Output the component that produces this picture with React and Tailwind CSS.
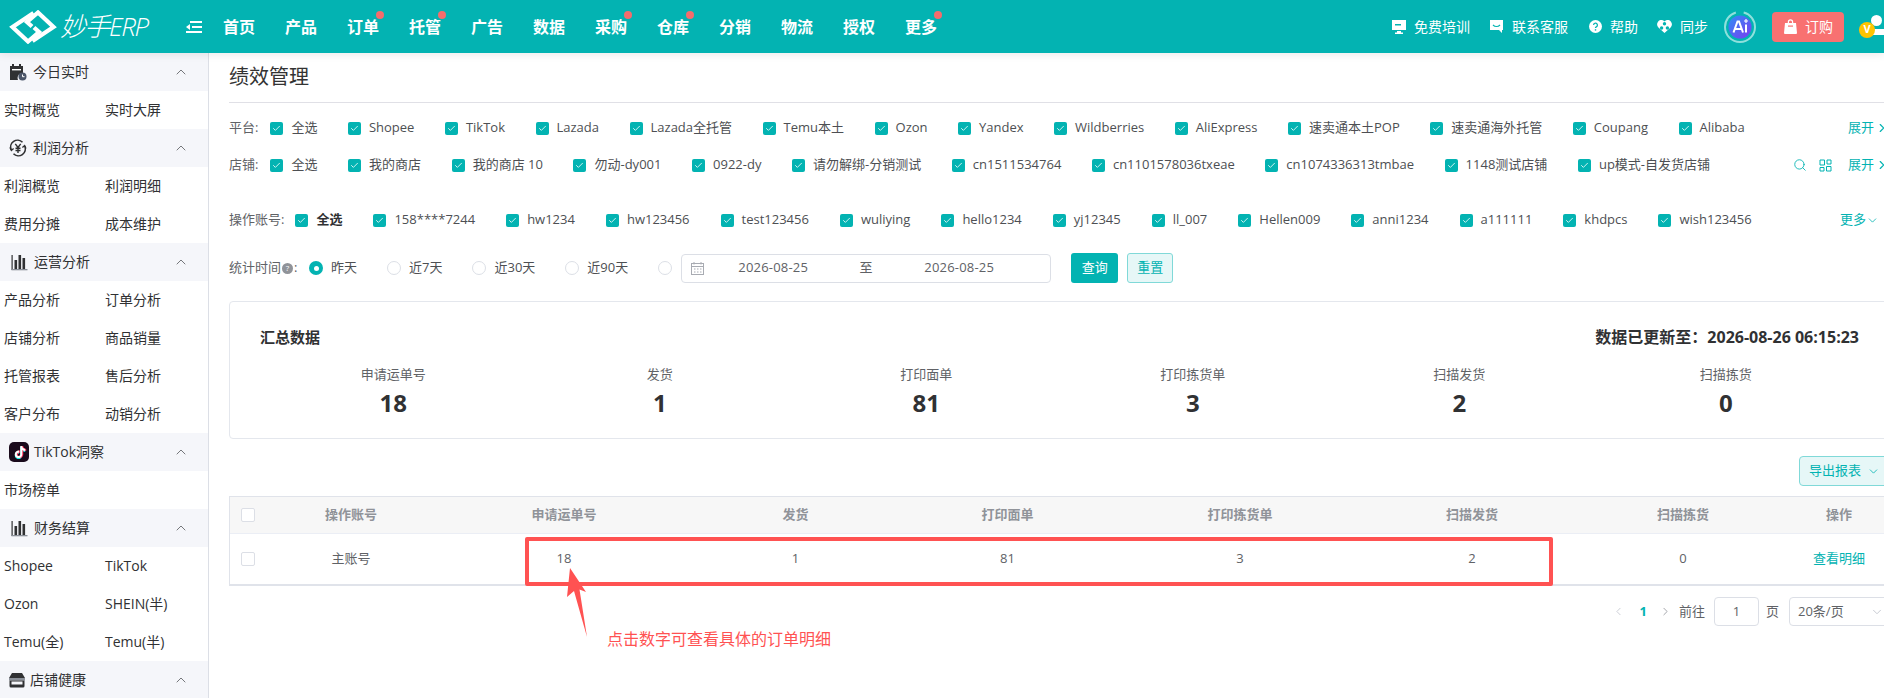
import { SiTiktok } from 'react-icons/si';
import { ChevronUp, ChevronDown, ChevronLeft, ChevronRight, Search, Check } from 'lucide-react';

const NAV = [
  ['首页'], ['产品'], ['订单', true], ['托管', true], ['广告'], ['数据'], ['采购', true],
  ['仓库', true], ['分销'], ['物流'], ['授权'], ['更多', true],
];
const PLATFORMS = ['全选', 'Shopee', 'TikTok', 'Lazada', 'Lazada全托管', 'Temu本土', 'Ozon', 'Yandex', 'Wildberries', 'AliExpress', '速卖通本土POP', '速卖通海外托管', 'Coupang', 'Alibaba'];
const SHOPS = ['全选', '我的商店', '我的商店 10', '勿动-dy001', '0922-dy', '请勿解绑-分销测试', 'cn1511534764', 'cn1101578036txeae', 'cn1074336313tmbae', '1148测试店铺', 'up模式-自发货店铺'];
const ACCOUNTS = ['全选', '158****7244', 'hw1234', 'hw123456', 'test123456', 'wuliying', 'hello1234', 'yj12345', 'll_007', 'Hellen009', 'anni1234', 'a111111', 'khdpcs', 'wish123456'];
const STATS = [['申请运单号', '18'], ['发货', '1'], ['打印面单', '81'], ['打印拣货单', '3'], ['扫描发货', '2'], ['扫描拣货', '0']];

// 侧边栏图标
const CalendarIcon = () => (
  <svg width="18" height="18" viewBox="0 0 18 18">
    <path d="M1 3h2V1h2v2h5V1h2v2h2v7a5 5 0 0 0-5 7H1z" fill="#303133" />
    <rect x="3" y="6" width="9" height="1.4" fill="#fff" />
    <circle cx="13.5" cy="13.5" r="4" fill="#4a5568" />
    <path d="M13.5 11.5v2.2h2" stroke="#fff" strokeWidth="1" fill="none" />
  </svg>
);
const YenIcon = () => (
  <svg width="18" height="18" viewBox="0 0 18 18" fill="none" stroke="#303133">
    <path d="M2.2 11A7 7 0 0 1 13.5 3.2" strokeWidth="1.6" />
    <path d="M15.8 7A7 7 0 0 1 4.5 14.8" strokeWidth="1.6" />
    <path d="M1 8.5l1.4 3 2.2-2M17 9.5l-1.4-3-2.2 2" strokeWidth="1.3" />
    <path d="M6.3 4.8L9 8.5l2.7-3.7M9 8.5V14M6.5 9.3h5M6.5 11.5h5" strokeWidth="1.4" />
  </svg>
);
const BarsIcon = () => (
  <svg width="17" height="17" viewBox="0 0 17 17" fill="#303133">
    <rect x="0.5" y="1" width="1.2" height="15" />
    <rect x="0.5" y="15" width="16" height="1.3" fill="#8a8f98" />
    <rect x="3.5" y="6" width="2.6" height="9" />
    <rect x="7.5" y="1" width="2.6" height="14" />
    <rect x="11.5" y="4" width="2.6" height="11" />
  </svg>
);
const StoreIcon = () => (
  <svg width="16" height="16" viewBox="0 0 16 16">
    <path d="M3 1h10l3 5H0z" fill="#303133" />
    <rect x="0" y="6" width="16" height="2.5" fill="#8a8f98" />
    <path d="M0.5 8.5h15V14a1.5 1.5 0 0 1-1.5 1.5H2A1.5 1.5 0 0 1 0.5 14z" fill="#303133" />
    <rect x="2.5" y="9.5" width="11" height="3" fill="#f5f6fa" />
  </svg>
);
const TiktokIcon = () => (
  <span className="relative flex h-5 w-5 items-center justify-center rounded-[5px] bg-[#1a0b1c]">
    <SiTiktok className="absolute left-[4.5px] top-[4.5px] text-[12px] text-[#25f4ee]" />
    <SiTiktok className="absolute left-[5.5px] top-[3.5px] text-[12px] text-[#fe2c55]" />
    <SiTiktok className="absolute left-[5px] top-[4px] text-[12px] text-white" />
  </span>
);

const SIDE = [
  { title: '今日实时', icon: <CalendarIcon />, gap: 'ml-[6px]', items: ['实时概览', '实时大屏'] },
  { title: '利润分析', icon: <YenIcon />, gap: 'ml-[6px]', items: ['利润概览', '利润明细', '费用分摊', '成本维护'] },
  { title: '运营分析', icon: <BarsIcon />, gap: 'ml-[6px]', pad: 'pl-[11px]', items: ['产品分析', '订单分析', '店铺分析', '商品销量', '托管报表', '售后分析', '客户分布', '动销分析'] },
  { title: 'TikTok洞察', icon: <TiktokIcon />, gap: 'ml-[5px]', items: ['市场榜单'] },
  { title: '财务结算', icon: <BarsIcon />, gap: 'ml-[6px]', pad: 'pl-[11px]', items: ['Shopee', 'TikTok', 'Ozon', 'SHEIN(半)', 'Temu(全)', 'Temu(半)'] },
  { title: '店铺健康', icon: <StoreIcon />, gap: 'ml-[5px]', items: [] },
];

const Logo = () => (
  <svg width="48" height="34" viewBox="0 0 48 34" fill="none" stroke="#fff" strokeWidth="4.2" strokeLinejoin="miter">
    <path d="M24.5 3L3.5 17l15.5 14.5L30 22l-5-4.5" />
    <path d="M23.5 31L44.5 17 29 2.5 18 12l5 4.5" />
  </svg>
);

const Box = ({ checked = true }) => (
  checked ? (
    <span className="flex h-[13px] w-[13px] shrink-0 items-center justify-center rounded-[2px] bg-[#03b3b2]">
      <Check size={9} strokeWidth={2.5} className="text-[#d9f5f4]" />
    </span>
  ) : (
    <span className="block h-[14px] w-[14px] shrink-0 rounded-[2px] border border-[#dcdfe6] bg-white" />
  )
);

const CheckRow = ({ items, boldFirst, gap = 'mr-[30.5px]' }) => (
  <div className="flex items-center">
    {items.map((t, i) => (
      <span key={t} className={`${gap} flex items-center whitespace-nowrap`}>
        <Box />
        <span className={`ml-[8px] ${boldFirst && i === 0 ? 'font-bold text-[#303133]' : 'text-[#4d4f53]'}`}>{t}</span>
      </span>
    ))}
  </div>
);

const Radio = ({ label, on }) => (
  <span className="mr-[30px] flex items-center whitespace-nowrap">
    {on ? (
      <span className="flex h-[14px] w-[14px] items-center justify-center rounded-full bg-[#03b3b2]">
        <span className="h-[5px] w-[5px] rounded-full bg-white" />
      </span>
    ) : (
      <span className="h-[14px] w-[14px] rounded-full border border-[#dcdfe6]" />
    )}
    {label && <span className="ml-[8px] text-[#4d4f53]">{label}</span>}
  </span>
);

const Expand = () => (
  <span className="flex items-center whitespace-nowrap text-[#03b3b2]">展开<ChevronRight size={14} className="ml-[1px]" /></span>
);

const COLS = 'grid grid-cols-[44px_154px_272px_191px_233px_232px_232px_190px_122px]';

export default function App() {
  return (
    <div className="flex h-[698px] w-[1884px] flex-col overflow-hidden bg-white text-[13px] text-[#606266] font-['Open_Sans','Noto_Sans_CJK_SC',sans-serif]">
      {/* 顶部导航 */}
      <header className="relative z-10 flex h-[53px] shrink-0 items-center bg-[#03b3b2] text-white shadow-[0_2px_8px_rgba(0,0,0,0.08)]">
        <div className="ml-[9px] shrink-0"><Logo /></div>
        <span className="ml-[3px] w-[89px] whitespace-nowrap text-[26px] font-light italic tracking-[-1.5px]">妙手ERP</span>
        <svg className="ml-[37px] shrink-0" width="16" height="12" viewBox="0 0 16 12" fill="#fff">
          <rect x="4" y="0" width="12" height="2" />
          <rect x="6" y="5" width="10" height="2" />
          <rect x="0" y="10" width="16" height="2" />
          <path d="M0 6l4-3v6z" />
        </svg>
        <nav className="ml-[21px] flex">
          {NAV.map(([t, dot]) => (
            <span key={t} className="relative mr-[30px] w-[32px] whitespace-nowrap text-[16px] font-bold">
              {t}
              {dot && <span className="absolute right-[-5px] top-[-4px] h-[8px] w-[8px] rounded-full bg-[#f56c6c]" />}
            </span>
          ))}
        </nav>
        <div className="ml-auto flex items-center text-[14px]">
          <svg width="14" height="15" viewBox="0 0 14 15" fill="#fff">
            <path d="M0 1h14v10H0zM5 12h4v1.5h2V15H3v-1.5h2z" />
            <rect x="3" y="5" width="6" height="1.5" fill="#03b3b2" />
          </svg>
          <span className="ml-[8px] whitespace-nowrap">免费培训</span>
          <svg className="ml-[19px]" width="15" height="15" viewBox="0 0 15 15" fill="#fff">
            <path d="M1 1h13v10h-1v3l-3-3H1z" />
            <path d="M4 6c2 2 5 2 7 0" stroke="#03b3b2" strokeWidth="1.2" fill="none" />
          </svg>
          <span className="ml-[8px] whitespace-nowrap">联系客服</span>
          <svg className="ml-[21px]" width="13" height="13" viewBox="0 0 13 13">
            <circle cx="6.5" cy="6.5" r="6.5" fill="#fff" />
            <path d="M4.6 5a1.9 1.9 0 1 1 2.7 1.8c-.6.3-.8.6-.8 1.3" stroke="#03b3b2" strokeWidth="1.3" fill="none" />
            <rect x="5.8" y="9.2" width="1.4" height="1.4" fill="#03b3b2" />
          </svg>
          <span className="ml-[8px] whitespace-nowrap">帮助</span>
          <svg className="ml-[19px]" width="15" height="13" viewBox="0 0 15 13">
            <path d="M7.5 1.6C9-.3 12-.5 13.8 1.4c1.6 1.8 1.5 4.4-.2 6.2L7.5 13 1.4 7.6C-.3 5.8-.4 3.2 1.2 1.4 3-.5 6-.3 7.5 1.6z" fill="#fff" />
            <circle cx="7.5" cy="3.8" r="1.7" fill="#03b3b2" />
            <circle cx="4.6" cy="8" r="1.7" fill="#03b3b2" />
            <circle cx="10.4" cy="8" r="1.7" fill="#03b3b2" />
          </svg>
          <span className="ml-[8px] whitespace-nowrap">同步</span>
          <svg className="ml-[16px]" width="32" height="32" viewBox="0 0 32 32">
            <defs>
              <linearGradient id="ai" x1="0" y1="0" x2="1" y2="1">
                <stop offset="0" stopColor="#2f8df5" />
                <stop offset="1" stopColor="#7c3cf0" />
              </linearGradient>
            </defs>
            <circle cx="16" cy="16" r="15" fill="none" stroke="#8fe0dc" strokeWidth="2" strokeDasharray="66 8" />
            <circle cx="16" cy="16" r="11.5" fill="url(#ai)" />
            <path d="M9.5 21.5L13.5 10.5h1.5l4 11M11 18h6.5M22 13.5v8" stroke="#fff" strokeWidth="2" fill="none" />
            <path d="M22 8v4M20 10h4" stroke="#fff" strokeWidth="1.2" />
          </svg>
          <span className="ml-[16px] flex h-[30px] w-[72px] items-center rounded-[4px] bg-[#f87171] pl-[12px]">
            <svg width="13" height="15" viewBox="0 0 13 15" fill="#fff">
              <path d="M1 4h2.8V3a2.7 2.7 0 0 1 5.4 0v1H12l1 10a1 1 0 0 1-1 1H1a1 1 0 0 1-1-1zM5 4h3V3a1.5 1.5 0 0 0-3 0z" />
              <rect x="4" y="6.5" width="5" height="1.2" fill="#f87171" />
            </svg>
            <span className="ml-[8px] whitespace-nowrap">订购</span>
          </span>
          <span className="relative ml-[15px] h-[32px] w-[25px] shrink-0">
            <span className="absolute left-[12px] top-[4px] h-[11px] w-[11px] rounded-full bg-white" />
            <span className="absolute left-[14px] top-[18px] h-[6px] w-[16px] bg-white" />
            <span className="absolute left-0 top-[11px] flex h-[16px] w-[16px] items-center justify-center rounded-full bg-[#ffc400] text-[11px] font-bold">V</span>
          </span>
        </div>
      </header>

      <div className="flex min-h-0 flex-1">
        {/* 侧边栏 */}
        <aside className="w-[209px] shrink-0 overflow-hidden border-r border-[#dcdfe6] text-[14px] text-[#303133]">
          {SIDE.map((s) => (
            <div key={s.title}>
              <div className={`flex h-[38px] items-center bg-[#f5f6fa] ${s.pad || 'pl-[9px]'}`}>
                {s.icon}
                <span className={`${s.gap} whitespace-nowrap pb-[2px]`}>{s.title}</span>
                <ChevronUp size={16} strokeWidth={1.3} className="ml-auto mr-[19px] text-[#606266]" />
              </div>
              <div className="grid grid-cols-[101px_1fr] pl-[4px]">
                {s.items.map((t) => (
                  <span key={t} className="flex h-[38px] items-center whitespace-nowrap pb-[2px]">{t}</span>
                ))}
              </div>
            </div>
          ))}
        </aside>

        {/* 主体内容 */}
        <main className="w-[1675px] shrink-0 pl-[20px]">
          <div className="h-[50px] border-b border-[#e0e0e6]">
            <h1 className="pt-[9px] text-[20px] leading-[30px] text-[#333]">绩效管理</h1>
          </div>

          <div className="mt-[15px] flex h-[20px] w-[1660px] items-center justify-between">
            <div className="flex items-center">
              <span className="mr-[12px] whitespace-nowrap">平台:</span>
              <CheckRow items={PLATFORMS} />
            </div>
            <Expand />
          </div>

          <div className="mt-[17px] flex h-[20px] w-[1660px] items-center justify-between">
            <div className="flex items-center">
              <span className="mr-[12px] whitespace-nowrap">店铺:</span>
              <CheckRow items={SHOPS} gap="mr-[30.6px]" />
            </div>
            <div className="flex items-center">
              <Search size={14} strokeWidth={1.5} className="text-[#03b3b2]" />
              <svg className="ml-[12px]" width="13" height="13" viewBox="0 0 13 13" fill="none" stroke="#03b3b2">
                <path d="M1 1h4.5v5H1zM8 1h4v4H8zM7.5 7.5H12V12H7.5zM1 8.5h4V12H1z" />
              </svg>
              <span className="ml-[16px]"><Expand /></span>
            </div>
          </div>

          <div className="mt-[35px] flex h-[20px] w-[1650px] items-center justify-between">
            <div className="flex items-center">
              <span className="mr-[11px] whitespace-nowrap">操作账号:</span>
              <CheckRow items={ACCOUNTS} boldFirst gap="mr-[31px]" />
            </div>
            <span className="flex items-center whitespace-nowrap text-[#03b3b2]">更多<ChevronDown size={13} strokeWidth={1.5} /></span>
          </div>

          <div className="mt-[23px] flex h-[30px] items-center">
            <span className="mr-[11px] flex w-[69px] items-center whitespace-nowrap">
              统计时间
              <span className="mx-[1px] flex h-[11px] w-[11px] items-center justify-center rounded-full bg-[#909399] text-[8px] text-white">?</span>:
            </span>
            <Radio label="昨天" on />
            <Radio label="近7天" />
            <Radio label="近30天" />
            <Radio label="近90天" />
            <span className="-mr-[21px]"><Radio /></span>
            <div className="flex h-[29px] w-[370px] items-center rounded-[4px] border border-[#dcdfe6] tracking-[0.2px] text-[#606266]">
              <svg className="ml-[9px]" width="13" height="13" viewBox="0 0 13 13" fill="none" stroke="#a8abb2">
                <rect x="0.5" y="1.5" width="12" height="11" />
                <path d="M0.5 4.5h12M3 0v2.5M10 0v2.5M3 7h1.5M6 7h1.5M9 7h1.5M3 10h1.5M6 10h1.5M9 10h1.5" />
              </svg>
              <span className="ml-[7px] w-[124px] text-center">2026-08-25</span>
              <span className="w-[62px] text-center">至</span>
              <span className="w-[124px] text-center">2026-08-25</span>
            </div>
            <span className="ml-[20px] flex h-[30px] w-[47px] items-center justify-center rounded-[3px] bg-[#03b3b2] text-white">查询</span>
            <span className="ml-[9px] flex h-[30px] w-[46px] items-center justify-center rounded-[3px] border border-[#80d9d8] bg-[#e6f7f7] text-[#03b3b2]">重置</span>
          </div>

          <section className="mt-[18px] h-[138px] w-[1661px] rounded-[4px] border border-[#e4e7ed] px-[30px] pt-[23px]">
            <div className="flex h-[24px] items-center justify-between text-[16px] font-bold text-[#303133]">
              <span className="text-[15px]">汇总数据</span>
              <span>数据已更新至：2026-08-26 06:15:23</span>
            </div>
            <div className="mt-[15px] grid grid-cols-6">
              {STATS.map(([label, n]) => (
                <div key={label} className="text-center">
                  <div className="leading-[20px] text-[#606266]">{label}</div>
                  <div className="mt-[2px] text-[24px] font-bold leading-[34px] text-[#303133]">{n}</div>
                </div>
              ))}
            </div>
          </section>

          <div className="mt-[17px] flex h-[30px] w-[1655px] justify-end">
            <span className="-mr-[10px] flex w-[95px] items-center rounded-[4px] border border-[#80d9d8] bg-[#e6f7f7] pl-[9px] whitespace-nowrap text-[#03b3b2]">
              导出报表<ChevronDown size={13} strokeWidth={1.5} className="ml-[6px]" />
            </span>
          </div>

          {/* 表格 */}
          <div className="relative mt-[10px] w-[1670px]">
            <div className="border-b-2 border-l border-t border-[#e0e3ea]">
              <div className={`${COLS} h-[37px] items-center border-b border-[#ebeef5] bg-[#f7f7f7] text-center font-bold text-[#909399]`}>
                <span className="flex pl-[11px]"><Box checked={false} /></span>
                {['操作账号', '申请运单号', '发货', '打印面单', '打印拣货单', '扫描发货', '扫描拣货', '操作'].map((t) => (
                  <span key={t}>{t}</span>
                ))}
              </div>
              <div className={`${COLS} h-[50px] items-center text-center`}>
                <span className="flex pl-[11px]"><Box checked={false} /></span>
                {['主账号', '18', '1', '81', '3', '2', '0'].map((t) => (
                  <span key={t}>{t}</span>
                ))}
                <span className="text-[#03b3b2]">查看明细</span>
              </div>
            </div>
            {/* 标注 */}
            <div className="absolute left-[296px] top-[41px] h-[49px] w-[1028px] rounded-[2px] border-[4px] border-[#ff5252]" />
            <svg className="absolute left-[330px] top-[68px]" width="30" height="76" viewBox="0 0 30 76">
              <path d="M11 4L27 28 20.5 25.5 28 73 15 27 8 33z" fill="#ff5252" />
            </svg>
            <span className="absolute left-[378px] top-[131px] whitespace-nowrap text-[16px] leading-[24px] text-[#ff5252]">点击数字可查看具体的订单明细</span>
          </div>

          <div className="mt-[11px] flex h-[29px] w-[1655px] items-center justify-end">
            <ChevronLeft size={13} strokeWidth={1.5} className="text-[#c0c4cc]" />
            <span className="ml-[15px] font-bold text-[#03b3b2]">1</span>
            <ChevronRight size={13} strokeWidth={1.5} className="ml-[12px] text-[#909399]" />
            <span className="ml-[7px]">前往</span>
            <span className="ml-[9px] flex h-[29px] w-[45px] items-center justify-center rounded-[4px] border border-[#dcdfe6]">1</span>
            <span className="ml-[7px]">页</span>
            <span className="-mr-[5px] ml-[10px] flex h-[29px] w-[100px] items-center rounded-[4px] border border-[#dcdfe6] pl-[8px]">
              20条/页<ChevronDown size={14} strokeWidth={1.5} className="ml-auto mr-[4px] text-[#c0c4cc]" />
            </span>
          </div>
        </main>
      </div>
    </div>
  );
}
